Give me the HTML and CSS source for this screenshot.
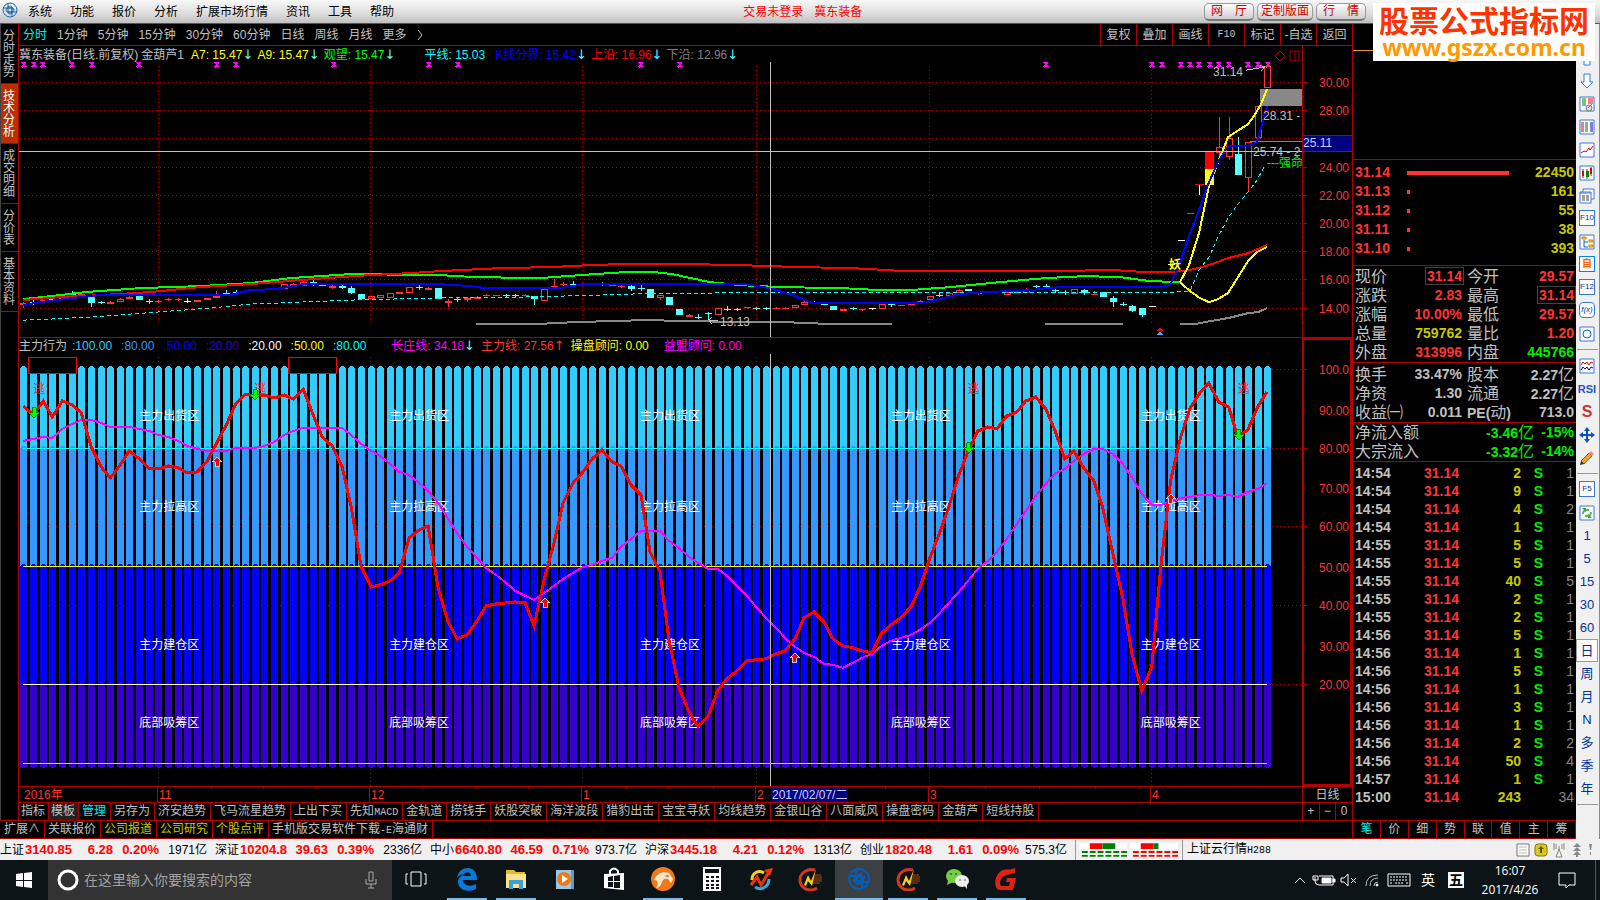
FILE: index.html
```html
<!DOCTYPE html>
<html lang="zh-CN">
<head>
    <meta charset="UTF-8">
    <meta name="viewport" content="width=device-width, initial-scale=1.0">
    <title>冀东装备 - 技术分析</title>
    <link rel="stylesheet" href="styles.css">
</head>
<body>
    <header class="menubar">
        <svg class="logo" viewBox="0 0 16 16"><circle cx="8" cy="8" r="7" /><path d="M1 6h9a2 2 0 0 1 0 4H5M15 10H6a2 2 0 0 1 0-4h5M6 1v9a2 2 0 0 0 4 0V5M10 15V6a2 2 0 0 0-4 0" /></svg>
        <nav class="menus">
            <a href="#">系统</a>
            <a href="#">功能</a>
            <a href="#">报价</a>
            <a href="#">分析</a>
            <a href="#">扩展市场行情</a>
            <a href="#">资讯</a>
            <a href="#">工具</a>
            <a href="#">帮助</a>
        </nav>
        <div class="window-title"><span>交易未登录</span><span>冀东装备</span></div>
        <div class="menubar-buttons">
            <button type="button">网&emsp;厅</button>
            <button type="button">定制版面</button>
            <button type="button">行&emsp;情</button>
        </div>
        <div class="watermark">
            <strong>股票公式指标网</strong>
            <span>www.gszx.com.cn</span>
        </div>
    </header>

    <main class="workspace">
        <div class="left-area">
            <div class="upper">
                <nav class="side-tabs">
                    <a href="#">分时走势</a>
                    <a href="#" class="active">技术分析</a>
                    <a href="#">成交明细</a>
                    <a href="#" class="short">分价表</a>
                    <a href="#">基本资料</a>
                </nav>
                <div class="chart-column">
                    <div class="toolbar">
                        <nav class="periods">
                            <a href="#" class="active">分时</a>
                            <a href="#">1分钟</a>
                            <a href="#">5分钟</a>
                            <a href="#">15分钟</a>
                            <a href="#">30分钟</a>
                            <a href="#">60分钟</a>
                            <a href="#">日线</a>
                            <a href="#">周线</a>
                            <a href="#">月线</a>
                            <a href="#">更多</a>
                            <svg class="chevron" viewBox="0 0 6 12"><path d="M1 1l4 5-4 5" /></svg>
                        </nav>
                        <div class="actions">
                            <button type="button">复权</button>
                            <button type="button">叠加</button>
                            <button type="button">画线</button>
                            <button type="button" class="half">F10</button>
                            <button type="button">标记</button>
                            <button type="button">-自选</button>
                            <button type="button">返回</button>
                        </div>
                    </div>

                    <section class="pane pane-price">
                        <div class="plot">
                            <div class="legend prices">
                                <span>冀东装备(日线.前复权)</span>
                                <span class="name">金葫芦1</span>
                                <span class="yellow down">A7: 15.47</span>
                                <span class="yellow down">A9: 15.47</span>
                                <span class="green down">观望: 15.47</span>
                                <span class="cyan plain">平线: 15.03</span>
                                <span class="blue down">K线分界: 15.42</span>
                                <span class="red down">上沿: 16.96</span>
                                <span class="gray down">下沿: 12.96</span>
                                <svg class="pane-icons" viewBox="0 0 26 12"><path d="M1 6l5-5 5 5-5 5zM16 1h9v10h-9zM21 1v10" /></svg>
                            </div>
                            <svg id="price" class="chart" viewBox="19 62 1283 275"></svg>
                        </div>
                        <svg id="priceAxis" class="axis" viewBox="1303 46 49 291"></svg>
                    </section>

                    <section class="pane pane-indicator">
                        <div class="plot">
                            <div class="legend values">
                                <span class="title">主力行为</span>
                                <span class="sky">:100.00</span>
                                <span class="azure">:80.00</span>
                                <span class="blue">:50.00</span>
                                <span class="indigo">:20.00</span>
                                <span class="white">:20.00</span>
                                <span class="yellow">:50.00</span>
                                <span class="cyan">:80.00</span>
                                <span class="magenta down long">长庄线: 34.18</span>
                                <span class="red up">主力线: 27.56</span>
                                <span class="yellow">操盘顾问: 0.00</span>
                                <span class="magenta wide">益盟顾问: 0.00</span>
                            </div>
                            <svg id="indicator" class="chart" viewBox="19 354 1283 432"></svg>
                        </div>
                        <svg id="indicatorAxis" class="axis framed" viewBox="1304 340 46 444"></svg>
                    </section>

                    <div class="date-row">
                        <svg id="dates" class="dates" viewBox="19 788 1283 15"></svg>
                        <button type="button" class="period-name">日线</button>
                    </div>

                    <div class="template-row">
                        <nav class="cells">
                            <a href="#" class="tight">指标</a>
                            <a href="#" class="tight pressed">模板</a>
                            <a href="#" class="active">管理</a>
                            <a href="#">另存为</a>
                            <a href="#">济安趋势</a>
                            <a href="#">飞马流星趋势</a>
                            <a href="#">上出下买</a>
                            <a href="#">先知<span class="half">MACD</span></a>
                            <a href="#">金轨道</a>
                            <a href="#">捞钱手</a>
                            <a href="#">妖股突破</a>
                            <a href="#">海洋波段</a>
                            <a href="#">猎豹出击</a>
                            <a href="#">宝宝寻妖</a>
                            <a href="#">均线趋势</a>
                            <a href="#">金银山谷</a>
                            <a href="#">八面威风</a>
                            <a href="#">操盘密码</a>
                            <a href="#">金葫芦</a>
                            <a href="#">短线持股</a>
                        </nav>
                        <div class="zoom-buttons">
                            <button type="button">+</button>
                            <button type="button">−</button>
                            <button type="button">0</button>
                        </div>
                    </div>
                </div>
            </div>
            <nav class="cells link-row">
                <a href="#">扩展∧</a>
                <a href="#">关联报价</a>
                <a href="#" class="gold">公司报道</a>
                <a href="#" class="gold">公司研究</a>
                <a href="#" class="gold">个股点评</a>
                <a href="#">手机版交易软件下载<span class="half">-E</span>海通财</a>
            </nav>
        </div>

        <aside class="quote">
            <div class="quote-top"></div>
            <table class="orders">
                <tr><td>31.14</td><td><i class="bar full"></i></td><td>22450</td></tr>
                <tr><td>31.13</td><td><i class="bar"></i></td><td>161</td></tr>
                <tr><td>31.12</td><td><i class="bar"></i></td><td>55</td></tr>
                <tr><td>31.11</td><td><i class="bar"></i></td><td>38</td></tr>
                <tr><td>31.10</td><td><i class="bar"></i></td><td>393</td></tr>
            </table>
            <table class="facts">
                <tr><th>现价</th><td class="up"><b class="boxed">31.14</b></td><th>今开</th><td class="up">29.57</td></tr>
                <tr><th>涨跌</th><td class="up">2.83</td><th>最高</th><td class="up"><b class="boxed">31.14</b></td></tr>
                <tr><th>涨幅</th><td class="up">10.00%</td><th>最低</th><td class="up">29.57</td></tr>
                <tr><th>总量</th><td class="vol">759762</td><th>量比</th><td class="up">1.20</td></tr>
                <tr><th>外盘</th><td class="up">313996</td><th>内盘</th><td class="dn">445766</td></tr>
            </table>
            <table class="facts ratios">
                <tr><th>换手</th><td>33.47%</td><th>股本</th><td>2.27<em>亿</em></td></tr>
                <tr><th>净资</th><td>1.30</td><th>流通</th><td>2.27<em>亿</em></td></tr>
                <tr><th>收益㈠</th><td>0.011</td><th><b>PE(</b>动<b>)</b></th><td>713.0</td></tr>
            </table>
            <table class="flows">
                <tr><th>净流入额</th><td>-3.46<em>亿</em></td><td>-15%</td></tr>
                <tr><th>大宗流入</th><td>-3.32<em>亿</em></td><td>-14%</td></tr>
            </table>
            <table class="ticks">
                <tr><td>14:54</td><td>31.14</td><td>2</td><td>S</td><td>1</td></tr>
                <tr><td>14:54</td><td>31.14</td><td>9</td><td>S</td><td>1</td></tr>
                <tr><td>14:54</td><td>31.14</td><td>4</td><td>S</td><td>2</td></tr>
                <tr><td>14:54</td><td>31.14</td><td>1</td><td>S</td><td>1</td></tr>
                <tr><td>14:55</td><td>31.14</td><td>5</td><td>S</td><td>1</td></tr>
                <tr><td>14:55</td><td>31.14</td><td>5</td><td>S</td><td>1</td></tr>
                <tr><td>14:55</td><td>31.14</td><td>40</td><td>S</td><td>5</td></tr>
                <tr><td>14:55</td><td>31.14</td><td>2</td><td>S</td><td>1</td></tr>
                <tr><td>14:55</td><td>31.14</td><td>2</td><td>S</td><td>1</td></tr>
                <tr><td>14:56</td><td>31.14</td><td>5</td><td>S</td><td>1</td></tr>
                <tr><td>14:56</td><td>31.14</td><td>1</td><td>S</td><td>1</td></tr>
                <tr><td>14:56</td><td>31.14</td><td>5</td><td>S</td><td>1</td></tr>
                <tr><td>14:56</td><td>31.14</td><td>1</td><td>S</td><td>1</td></tr>
                <tr><td>14:56</td><td>31.14</td><td>3</td><td>S</td><td>1</td></tr>
                <tr><td>14:56</td><td>31.14</td><td>1</td><td>S</td><td>1</td></tr>
                <tr><td>14:56</td><td>31.14</td><td>2</td><td>S</td><td>2</td></tr>
                <tr><td>14:56</td><td>31.14</td><td>50</td><td>S</td><td>4</td></tr>
                <tr><td>14:57</td><td>31.14</td><td>1</td><td>S</td><td>1</td></tr>
                <tr><td>15:00</td><td>31.14</td><td>243</td><td></td><td>34</td></tr>
            </table>
            <nav class="quote-tabs">
                <a href="#" class="active">笔</a>
                <a href="#">价</a>
                <a href="#">细</a>
                <a href="#">势</a>
                <a href="#">联</a>
                <a href="#">值</a>
                <a href="#">主</a>
                <a href="#">筹</a>
            </nav>
        </aside>

        <div class="toolstrip">
            <button type="button" aria-label="上移"><svg viewBox="0 0 16 16"><path class="line" d="M8 1L2 8h3v7h6V8h3z" /></svg></button>
            <button type="button" aria-label="下移"><svg viewBox="0 0 16 16"><path class="line" d="M8 15l6-6h-3V1H5v8H2z" /></svg></button>
            <button type="button" aria-label="报价设置"><svg viewBox="0 0 16 16"><path class="frame" d="M1 1h14v14H1z" /><path stroke="#008000" d="M3 3h4M3 5h4M3 7h4M3 9h4" /><path stroke="#e00000" d="M9 3h5M9 5h5M9 7h5" /><circle cx="10" cy="12" r="3" fill="#ddd" stroke="#777" /><path stroke="#777" d="M9 12l4-4" /></svg></button>
            <button type="button" aria-label="行情表"><svg viewBox="0 0 16 16"><path class="frame" d="M1 1h14v14H1z" /><path stroke="#e00000" d="M2 4h3M2 6h3M2 8h3M2 10h3M2 12h3" /><path stroke="#008000" d="M6 4h3M6 6h3M6 8h3M6 10h3M6 12h3" /><path stroke="#0000c0" d="M11 4h3M11 6h3M11 8h3M11 10h3M11 12h3" /></svg></button>
            <button type="button" aria-label="分时图"><svg viewBox="0 0 16 16"><path class="frame" d="M1 1h14v14H1z" /><path fill="none" stroke="#e00000" d="M2 11l3-2 2 1 3-4 1 2 3-4" /></svg></button>
            <button type="button" aria-label="K线图"><svg viewBox="0 0 16 16"><path class="frame" d="M1 1h14v14H1z" /><path stroke="#e00000" d="M4 4v9M12 2v9" /><path stroke="#008000" d="M8 4v10" /><path fill="#e00000" d="M3 6h2v5H3zM11 3h2v6h-2z" /><path fill="#008000" d="M7 6h3v6H7z" /></svg></button>
            <button type="button" aria-label="资讯"><svg viewBox="0 0 16 16"><path class="frame" d="M4 1h11v10H4z" /><path class="frame" d="M1 4h11v11H1z" /><path stroke="#3a78d8" d="M1 5h11" /><path stroke="#444" d="M3 8h3M3 10h3M3 12h3M7 8h3M7 10h3M7 12h3" /></svg></button>
            <button type="button" class="key">F10</button>
            <button type="button" aria-label="板块"><svg viewBox="0 0 16 16"><path class="frame" d="M1 1h14v14H1z" /><path fill="#fc3" stroke="#c80" d="M3 3h4v2H3zM10 6h4v2h-4zM10 11h4v2h-4z" /><path fill="none" stroke="#06c" d="M5 6v7h4M5 8h4" /></svg></button>
            <button type="button" class="key self">自</button>
            <button type="button" class="key">F12</button>
            <button type="button" class="key round">f(x)</button>
            <button type="button" aria-label="周期"><svg viewBox="0 0 16 16"><path class="frame" d="M1 1h14v14H1z" /><circle cx="8" cy="8" r="4" fill="none" stroke="#06c" /></svg></button>
            <hr>
            <button type="button" aria-label="指标"><svg viewBox="0 0 16 16"><path class="frame" d="M1 1h14v14H1z" /><path fill="none" stroke="#e00000" d="M2 7l2-3 2 2 2-2 2 3 2-3 2 1" /><path fill="none" stroke="#0000c0" d="M2 12l2-3 2 2 2-2 2 3 2-3 2 1" /></svg></button>
            <button type="button" class="rsi">RSI</button>
            <button type="button" class="dollar">S</button>
            <button type="button" aria-label="移动"><svg viewBox="0 0 16 16"><path fill="#0a52b8" d="M8 0l3 4H9v3h3V5l4 3-4 3V9H9v3h2l-3 4-3-4h2V9H4v2L0 8l4-3v2h3V4H5z" /></svg></button>
            <button type="button" aria-label="画线"><svg viewBox="0 0 16 16"><path fill="#f0a030" stroke="#a05a10" d="M2 11l8-8 3 3-8 8z" /><path fill="#e88" d="M10 3l2-2 3 3-2 2z" /><path fill="#333" d="M1 15l1-4 3 3z" /></svg></button>
            <hr>
            <button type="button" class="key">F5</button>
            <button type="button" aria-label="刷新"><svg viewBox="0 0 16 16"><path class="frame" d="M1 1h14v14H1z" /><path fill="none" stroke="#5b5" stroke-width="2" d="M4 9q0-4 4-4h2M12 7q0 4-4 4H6" /><path fill="#3a3" d="M3 3h4v4zM13 13H9V9z" /></svg></button>
            <button type="button">1</button>
            <button type="button">5</button>
            <button type="button">15</button>
            <button type="button">30</button>
            <button type="button">60</button>
            <button type="button" class="pressed">日</button>
            <button type="button">周</button>
            <button type="button">月</button>
            <button type="button">N</button>
            <button type="button">多</button>
            <button type="button">季</button>
            <button type="button">年</button>
            <hr>
        </div>
    </main>

    <section class="indexbar">
        <div class="index"><span>上证</span><b>3140.85</b><b>6.28</b><b>0.20%</b><span>1971亿</span></div>
        <div class="index"><span>深证</span><b>10204.8</b><b>39.63</b><b>0.39%</b><span>2336亿</span></div>
        <div class="index"><span>中小</span><b>6640.80</b><b>46.59</b><b>0.71%</b><span>973.7亿</span></div>
        <div class="index"><span>沪深</span><b>3445.18</b><b>4.21</b><b>0.12%</b><span>1313亿</span></div>
        <div class="index"><span>创业</span><b>1820.48</b><b>1.61</b><b>0.09%</b><span>575.3亿</span></div>
        <svg class="breadth" viewBox="0 0 108 20">
            <path fill="#fff" d="M3 3h49v6H3zM55 3h49v6H55z" />
            <path fill="red" d="M14 3h13v6H14zM66 3h13v6H66z" />
            <path fill="green" d="M27 3h13v6H27zM79 3h5v6h-5z" />
            <path stroke="green" stroke-width="2" stroke-dasharray="6 2" d="M6 12h47M6 16h47" />
            <path stroke="red" stroke-width="2" stroke-dasharray="6 2" d="M58 12h47M58 16h47" />
        </svg>
        <span class="server">上证云行情<span class="half">H288</span></span>
        <svg class="status-icons" viewBox="0 0 80 18">
            <path fill="#fff" stroke="#777" d="M2 3h12v12H2z" /><path stroke="#bbb" d="M4 6h8M4 9h8M4 12h8" />
            <rect x="20" y="3" width="12" height="12" rx="3" fill="#d8c820" stroke="#887a00" /><path fill="#5a5000" d="M26 5l3 3h-2v4h-2V8h-2z" />
            <path fill="none" stroke="#887" d="M44 8l-3 8h6zM44 5v4M41 3v5M47 3v5M39 2v7M49 2v7" />
            <path fill="#888" d="M62 2l4 4h-8zM62 6l4 4h-8zM62 10l4 4h-8zM61 14h2v2h-2zM74 3h3l-1 6h-1zM75 11h1v3h-1z" />
        </svg>
    </section>

    <footer class="taskbar">
        <button type="button" class="start" aria-label="开始"><svg viewBox="0 0 16 16"><path fill="#fff" d="M0 2l7-1v7H0zM8 1l8-1v8H8zM0 9h7v6l-7-1zM8 9h8v7l-8-1z" /></svg></button>
        <label class="search">
            <svg class="cortana" viewBox="0 0 22 22"><circle cx="11" cy="11" r="9" /></svg>
            <input type="text" placeholder="在这里输入你要搜索的内容">
            <svg class="mic" viewBox="0 0 12 18"><path d="M4 1h4v9H4zM1 8v5h10V8M6 13v4M3 17h6" /></svg>
        </label>
        <div class="apps">
            <button type="button" class="taskview" aria-label="任务视图"><svg viewBox="0 0 24 24"><path fill="none" stroke="#fff" d="M7 5h10v14H7zM4 7H2v10h2M20 7h2v10h-2" /></svg></button>
            <button type="button" class="running" aria-label="Edge"><svg viewBox="0 0 24 24"><path fill="#0a78d7" d="M2 11C3 4 8 1 13 1c6 0 9 5 9 12H8c0 6 8 7 13 4v5C13 26 3 23 3 15c0-4 3-6 6-8-2 0-5 1-7 4zm6-2h8c0-5-7-5-8 0z" /></svg></button>
            <button type="button" class="running" aria-label="文件资源管理器"><svg viewBox="0 0 24 24"><path fill="#e8b830" d="M2 3h8l2 2h9v15H2z" /><path fill="#fde28c" d="M2 7h20v14H2z" /><path fill="#3aa0dc" d="M5 13h14v9h-4v-5H9v5H5z" /></svg></button>
            <button type="button" aria-label="播放器"><svg viewBox="0 0 24 24"><path fill="#9cc8e4" d="M3 3h18v19H3z" /><path fill="#5f9cc4" d="M18 3h3v19h-3z" /><circle cx="11" cy="12" r="7" fill="#f07818" /><path fill="#fff" d="M9 8l6 4-6 4z" /></svg></button>
            <button type="button" aria-label="应用商店"><svg viewBox="0 0 24 24"><path fill="none" stroke="#fff" stroke-width="2" d="M8 7V4q4-5 8 0v3" /><path fill="#fff" d="M2 7l20-1v17L2 21z" /><path fill="#0d1518" d="M6 10l5-1v5H6zM12 9l6-1v6h-6zM6 15h5v5H6zM12 15h6v6h-6z" /></svg></button>
            <button type="button" class="running" aria-label="浏览器"><svg viewBox="0 0 24 24"><circle cx="12" cy="12" r="12" fill="#f07a1a" /><path fill="#ffe6c8" d="M3 13C6 6 12 4 18 6l4 6-2 4-3-4c-3-1-5 0-6 3-1 4-4 6-6 6 2-3 2-5 1-7-1-1-2-1-3-1z" /><path fill="#c45a10" d="M13 9l4-1 1 2z" /></svg></button>
            <button type="button" aria-label="计算器"><svg viewBox="0 0 24 24"><path fill="#fff" d="M3 0h18v24H3z" /><path fill="#0d1518" d="M5 2h14v4H5z" /><path stroke="#0d1518" stroke-width="2" stroke-dasharray="3 2" d="M6 10h13M6 14h13M6 18h13M6 21h13" /></svg></button>
            <button type="button" aria-label="行情软件"><svg viewBox="0 0 24 24"><path fill="none" stroke="#fc2" stroke-width="3" d="M3 13C3 5 10 3 15 6" /><path fill="none" stroke="#3ad" stroke-width="3" d="M20 12c0 8-8 12-14 8" /><path fill="none" stroke="#e31" stroke-width="3" d="M2 18l6-8 4 8L20 5" /><path fill="#e31" d="M15 3l9-2-3 8z" /></svg></button>
            <button type="button" aria-label="交易软件"><svg viewBox="0 0 24 24"><path fill="none" stroke="#d4381c" stroke-width="3" d="M19 21C11 26 2 21 2 13 2 6 9 1 17 3" /><path fill="#fc2" d="M6 18L10 8l3 6 5-12-4 17-4-5-2 5z" /><path stroke="#a4481c" d="M17 8h6M16 10h8M16 12h8M15 14h9M15 16h7" /></svg></button>
            <button type="button" class="running current" aria-label="海通证券"><svg viewBox="0 0 24 24"><circle cx="12" cy="12" r="10" fill="none" stroke="#0a5cb0" stroke-width="2" /><path fill="none" stroke="#0a5cb0" stroke-width="2" d="M2 9h12a2 2 0 0 1 0 5H6M22 15H10a2 2 0 0 1 0-5h8M9 2v12a2 2 0 0 0 5 0V6M15 22V10a2 2 0 0 0-5 0v8" /></svg></button>
            <button type="button" class="running" aria-label="交易软件"><svg viewBox="0 0 24 24"><path fill="none" stroke="#d4381c" stroke-width="3" d="M19 21C11 26 2 21 2 13 2 6 9 1 17 3" /><path fill="#fc2" d="M6 18L10 8l3 6 5-12-4 17-4-5-2 5z" /><path stroke="#a4481c" d="M17 8h6M16 10h8M16 12h8M15 14h9M15 16h7" /></svg></button>
            <button type="button" class="running" aria-label="微信"><svg viewBox="0 0 24 24"><ellipse cx="9" cy="9" rx="8" ry="7" fill="#7c4" /><path fill="#7c4" d="M3 13l-1 5 6-3z" /><circle cx="6" cy="7" r="1" fill="#264" /><circle cx="11" cy="7" r="1" fill="#264" /><ellipse cx="17" cy="14" rx="7" ry="6" fill="#eee" /><path fill="#eee" d="M19 18l3 4v-6z" /><circle cx="15" cy="13" r="1" fill="#888" /><circle cx="20" cy="13" r="1" fill="#888" /></svg></button>
            <button type="button" class="running" aria-label="行情工具"><svg viewBox="0 0 24 24"><path fill="#d21" d="M21 1v5l-8 2c-7 1-9 11-5 11h7l1-4h-4l1-4h9l-3 12H6C0 23-1 10 7 4c4-3 8 0 14-3z" /></svg></button>
        </div>
        <div class="tray">
            <svg class="tray-icons" viewBox="0 0 128 24">
                <path d="M2 15l5-5 5 5" />
                <path d="M26 8h14v9H26M22 9v4M20 8h5v4h-5zM22 13q0 4 4 4" /><path fill="#fff" d="M29 10h9v5h-9zM40 11h2v3h-2z" />
                <path d="M48 10h3l4-4v12l-4-4h-3zM58 10l5 5M63 10l-5 5" />
                <path d="M73 18Q73 7 85 7M77 18q0-8 8-8M81 18q0-4 4-4" stroke="#bbb" /><circle cx="84" cy="17" r="1" fill="#fff" />
                <path d="M95 6h22v12H95z" /><path stroke-dasharray="2 1" d="M97 9h18M97 12h18M97 15h3M102 15h9M113 15h2" />
            </svg>
            <span class="ime">英</span>
            <span class="ime wubi">五</span>
            <div class="clock"><span>16:07</span><span>2017/4/26</span></div>
            <svg class="notice" viewBox="0 0 18 18"><path d="M1 2h16v12h-6l-3 3v-3H1z" /></svg>
            <span class="show-desktop"></span>
        </div>
    </footer>
    <script src="chart.js"></script>
</body>
</html>
```

FILE: styles.css
```css
* { margin: 0; padding: 0; box-sizing: border-box; }
body { min-height: 100vh; display: flex; flex-direction: column; background: #000; color: #c0c0c0; font-family: "Liberation Sans", "Noto Sans CJK SC", sans-serif; font-size: 12px; line-height: 16px; white-space: nowrap; overflow-x: hidden; }
a { color: inherit; text-decoration: none; }
button { background: none; border: none; color: inherit; font: inherit; white-space: nowrap; }
table { border-collapse: collapse; width: 100%; }
em, i { font-style: normal; }
.half { font-family: "Liberation Mono", monospace; font-size: 10px; }

.menubar { position: relative; height: 24px; flex: none; display: flex; align-items: center; background: linear-gradient(#f8f8f8, #dcdcdc 60%, #c0c0c0); border-bottom: 1px solid #555; color: #000; }
.logo { width: 16px; height: 16px; margin: 0 10px 4px 2px; fill: none; stroke: #1668a8; }
.menus { display: flex; gap: 18px; }
.window-title { margin-left: 349px; display: flex; gap: 11px; color: #f00; }
.menubar-buttons { margin-left: auto; margin-right: 234px; display: flex; gap: 3px; }
.menubar-buttons button { height: 18px; padding: 0 3px; min-width: 50px; color: #c00; background: linear-gradient(#fff, #ccc); border: 1px solid #999; border-bottom: 2px solid #777; border-radius: 5px; line-height: 14px; }
.watermark { position: absolute; z-index: 2; right: 5px; top: 3px; width: 222px; height: 58px; background: #fff; text-align: center; }
.watermark strong, .watermark span { display: block; font-weight: bold; }
.watermark strong { font-size: 30px; line-height: 37px; color: #f30; }
.watermark span { font-family: "Noto Sans", sans-serif; font-size: 23px; line-height: 14px; color: #f90; }

.workspace { flex: 1; display: flex; }
.left-area { flex: 1; min-width: 0; display: flex; flex-direction: column; border-right: 1px solid #b00000; }
.upper { flex: 1; display: flex; }
.side-tabs { width: 19px; border-right: 1px solid #b00000; border-left: 1px solid #444; }
.side-tabs a { display: flex; align-items: center; height: 60px; padding: 0 3px 0 2px; border-bottom: 1px solid #b00000; line-height: 12px; white-space: normal; word-break: break-all; }
.side-tabs a.short { height: 48px; }
.side-tabs a.active { background: #b83000; color: #fff; }
.chart-column { flex: 1; min-width: 0; display: flex; flex-direction: column; }

.toolbar { height: 22px; flex: none; display: flex; justify-content: space-between; border-bottom: 1px solid #b00000; }
.periods { display: flex; align-items: center; gap: 10px; padding-left: 4px; }
.periods .active { color: #0ee; }
.chevron { width: 6px; height: 12px; fill: none; stroke: #c0c0c0; }
.actions { display: flex; }
.actions button { width: 36px; border-left: 1px solid #b00000; }

.pane { display: flex; min-height: 0; border-bottom: 1px solid #b00000; }
.pane-price { flex: 292 0 0; }
.pane-indicator { flex: 449 0 0; }
.plot { flex: 1; min-width: 0; display: flex; flex-direction: column; }
.legend { height: 16px; flex: none; display: flex; gap: 7px; position: relative; }
.prices { padding-top: 1px; }
.legend .name { margin-left: -4px; }
.legend .plain { margin: 0 3px 0 25px; }
.legend .down::after, .legend .up::after { content: "↓"; display: inline-block; width: 8px; color: #5ff; font-family: "DejaVu Sans", sans-serif; font-size: 13px; line-height: 14px; }
.legend .up::after { content: "↑"; color: #f33; }
.values { gap: 9px; }
.values .title { margin-right: -4px; }
.values .long { margin-left: 16px; }
.values .wide { margin-left: 6px; }
.pane-icons { width: 26px; height: 12px; margin: 3px 2px 0 auto; fill: none; stroke: #b00000; }
.chart { flex: 1; min-height: 0; width: 100%; display: block; shape-rendering: crispEdges; }
.axis { width: 50px; flex: none; border-left: 1px solid #b00000; shape-rendering: crispEdges; }
.axis.framed { border: 2px solid #b00000; }
.yellow { color: #ff0; }
.green { color: #0f0; }
.cyan { color: #0ff; }
.blue { color: #00f; }
.red { color: #f00; }
.gray { color: #808080; }
.sky { color: #3cf; }
.azure { color: #39f; }
.indigo { color: #30c; }
.white { color: #fff; }
.magenta { color: #f0f; }

/* chart parts */
svg text { font-size: 12px; fill: #c0c0c0; }
svg .tick { fill: #f33; }
svg .cursor-text { fill: #d0d0ff; }
svg .zone { fill: #fff; }
svg .flee { fill: #f22; }
svg .strong { fill: #0f0; }
svg .demon { fill: #ff0; font-weight: bold; }
.grid { stroke: #b00000; stroke-dasharray: 1 3; }
.rule { stroke: #b00000; }
.cross { stroke: #c0c0c0; }
.curve { fill: none; stroke-width: 2; }
.curve.thick { stroke-width: 3; }
.curve.dash { stroke-width: 1; stroke-dasharray: 4 3; }

.date-row { height: 16px; flex: none; display: flex; border-bottom: 1px solid #b00000; }
.dates { flex: 1; min-width: 0; shape-rendering: crispEdges; }
.period-name { width: 50px; border-left: 1px solid #b00000; }
.template-row { height: 17px; flex: none; display: flex; justify-content: space-between; line-height: 17px; }
.cells { display: flex; }
.cells a { padding: 0 4px 0 3px; border-right: 1px solid #b00000; }
.cells .tight { padding: 0 3px 0 2px; }
.cells .pressed { background: #222; }
.cells .active { color: #0ee; }
.cells .gold { color: #c8c800; }
.zoom-buttons { display: flex; width: 50px; }
.zoom-buttons button { flex: 1; border-left: 1px solid #b00000; }
.link-row { height: 19px; flex: none; padding-left: 1px; border-top: 1px solid #b00000; border-bottom: 1px solid #b00000; line-height: 17px; }

.quote { width: 223px; flex: none; display: flex; flex-direction: column; font-size: 14px; font-weight: bold; }
.quote-top { height: 136px; padding-top: 26px; border-bottom: 1px solid #b00000; }
.quote-top::before { content: ""; display: block; height: 1px; background: #e89820; }
.quote table { display: block; padding: 0 2px; border-bottom: 1px solid #b00000; }
.quote tbody { display: block; }
.quote tr { display: flex; height: 19px; line-height: 19px; }
.quote td { text-align: right; }
.quote th, .quote em { font-weight: normal; font-size: 16px; }
.quote th { text-align: left; }
.quote th b { font-size: 14px; }
.quote .orders { height: 106px; padding-top: 3px; }
.orders td:first-child { width: 52px; text-align: left; color: #f33; }
.orders td:nth-child(2) { flex: 1; text-align: left; }
.orders td:last-child { color: #c8c800; }
.bar { display: inline-block; vertical-align: middle; width: 3px; height: 4px; background: #f33; }
.bar.full { width: 102px; }
.quote .facts { padding-top: 1px; }
.quote .ratios { padding-top: 2px; }
.facts th { width: 40px; }
.facts td { flex: 1; }
.facts th:nth-child(3) { margin-left: 5px; width: 44px; }
.facts th:first-child { width: 48px; }
.facts td:nth-child(2) { flex: none; width: 59px; }
.boxed { display: inline-block; height: 18px; line-height: 16px; padding: 0 1px; border: 1px solid #444; margin-right: -2px; }
.up { color: #f33; }
.dn, .flows td { color: #0e0; }
.vol { color: #c8c800; }
.flows th { flex: 1; }
.flows td:last-child { width: 40px; }
.quote .ticks { flex: 1; padding-top: 2px; }
.quote .ticks tr { height: 18px; line-height: 18px; }
.ticks td:nth-child(1) { width: 36px; text-align: left; }
.ticks td:nth-child(2) { width: 68px; color: #f33; }
.ticks td:nth-child(3) { width: 62px; color: #c8c800; }
.ticks td:nth-child(4) { width: 22px; color: #0e0; }
.ticks td:nth-child(5) { flex: 1; color: #888; font-weight: normal; }
.quote-tabs { height: 18px; flex: none; display: flex; border-bottom: 1px solid #b00000; font-size: 12px; font-weight: normal; line-height: 17px; }
.quote-tabs a { flex: 1; text-align: center; border-right: 1px solid #b00000; }
.quote-tabs .active { color: #0ee; }

.toolstrip { width: 24px; flex: none; display: flex; flex-direction: column; padding-top: 22px; background: #f0f0f0; border-right: 1px solid #888; color: #039; }
.toolstrip button { display: flex; align-items: center; justify-content: center; width: 22px; height: 23px; flex: none; font-size: 13px; }
.toolstrip svg { width: 16px; height: 16px; }
.toolstrip hr { border: none; border-top: 1px solid #999; margin: 4px 1px; }
.toolstrip .line { fill: #fff; stroke: #3a78d8; }
.toolstrip .frame { fill: #fff; stroke: #3a78d8; }
.toolstrip .key { width: 16px; height: 16px; margin: 3px 3px 4px; border: 1px solid #3a78d8; background: #fff; font-size: 8px; line-height: 14px; }
.toolstrip .self { color: #f60; border-color: #08e; font-weight: bold; font-size: 10px; }
.toolstrip .round { border-radius: 4px; font-style: italic; }
.toolstrip .rsi { font-size: 11px; font-weight: bold; color: #2a50c8; }
.toolstrip .dollar { font-size: 16px; font-weight: bold; color: #c33; }
.toolstrip .pressed { background: #fafafa; border: 1px solid #999; }

.indexbar { height: 21px; flex: none; display: flex; align-items: center; background: #f0f0f0; color: #000; }
.index { display: grid; grid-template-columns: 24px 48px 41px 46px 48px; width: 215px; text-align: right; }
.index span:first-child { text-align: left; }
.index b { color: #f00; font-size: 13px; }
.breadth { width: 108px; height: 20px; border-left: 1px solid #999; border-right: 1px solid #999; }
.server { margin-left: 4px; }
.status-icons { width: 80px; height: 18px; margin: 0 5px 0 auto; }

.taskbar { height: 40px; flex: none; display: flex; background: #0c1418; color: #fff; }
.start { width: 48px; }
.start svg { width: 16px; height: 16px; vertical-align: middle; }
.search { width: 344px; display: flex; align-items: center; background: #333; }
.cortana { width: 22px; height: 22px; margin: 0 5px 0 9px; fill: none; stroke: #fff; stroke-width: 3; }
.search input { flex: 1; min-width: 0; background: none; border: none; outline: none; color: #fff; font: inherit; font-size: 14px; }
.search input::placeholder { color: #a0a0a0; }
.mic { width: 12px; height: 18px; margin-right: 15px; fill: none; stroke: #aaa; }
.apps { display: flex; gap: 1px; }
.apps button { width: 48px; border-bottom: 2px solid transparent; display: flex; align-items: center; justify-content: center; }
.apps svg { width: 24px; height: 24px; }
.apps .taskview { margin-right: 2px; }
.apps .running { width: 40px; margin: 0 4px; border-color: #76b9ed; }
.apps .current { width: 48px; margin: 0; background: #3c4043; }
.tray { margin-left: auto; display: flex; align-items: center; }
.tray-icons { width: 128px; height: 24px; fill: none; stroke: #fff; }
.ime { font-size: 14px; line-height: 16px; }
.wubi { margin: 0 11px 0 13px; background: #fff; color: #000; font-weight: bold; padding: 0 1px; }
.clock { width: 70px; font-family: "Open Sans", sans-serif; text-align: center; line-height: 19px; }
.clock span { display: block; }
.notice { width: 18px; height: 18px; margin: 0 19px 0 13px; fill: none; stroke: #fff; }
.show-desktop { width: 5px; height: 40px; border-left: 1px solid #555; }
```

FILE: chart.js
```js
// x of the n-th trading day
const X = i => 23.4 + i * 9.643;
const rect = (x, y, w, h, fill, stroke = 'none') => `<rect x="${x}" y="${y}" width="${w}" height="${h}" fill="${fill}" stroke="${stroke}"/>`;
const line = (x1, y1, x2, y2, attrs) => `<line x1="${x1}" y1="${y1}" x2="${x2}" y2="${y2}" ${attrs}/>`;
const text = (x, y, s, cls = '') => `<text x="${x}" y="${y}" class="${cls}">${s}</text>`;
const curve = (pts, color, cls = '') => `<polyline class="curve ${cls}" stroke="${color}" points="${pts}"/>`;
const draw = (id, s) => { document.getElementById(id).innerHTML = s; };

const months = [[14, '11'], [36, '12'], [58, '1'], [76, '2'], [94, '3'], [117, '4']];
const RED = '#ff3333', CYAN = '#55ffff', WHITE = '#ffffff';
const colors = { r: RED, c: CYAN, w: WHITE };

// day, colour, high, body top, body bottom, low
const candles = [
    [0,'r',302,303,305,308],[1,'c',300,302,303,305],[2,'r',300,300,302,302],[3,'c',297,299,300,302],[4,'r',295,296,299,299],[5,'c',291,294,295,298],[6,'r',293,294,297,297],[7,'c',295,296,303,307],
    [8,'c',301,302,303,304],[9,'r',301,302,304,304],[10,'r',298,299,302,302],[11,'r',296,297,299,299],[12,'c',296,296,300,300],[13,'c',299,301,302,304],[14,'r',300,301,302,303],[15,'r',298,299,300,301],
    [16,'r',298,299,300,301],[17,'w',298,301,302,303],[18,'r',300,300,302,302],[19,'r',298,298,300,300],[20,'r',291,296,298,298],[21,'c',290,293,294,295],[22,'c',290,292,293,294],[27,'r',284,284,289,289],
    [28,'r',283,284,287,287],[29,'r',280,282,286,286],[30,'c',280,282,283,286],[31,'c',284,285,286,286],[32,'r',285,286,288,289],[33,'c',285,286,288,289],[34,'c',286,288,293,294],[35,'c',294,294,299,299],
    [36,'r',296,296,299,299],[37,'r',295,295,298,298],[38,'r',293,293,298,298],[39,'r',292,292,294,294],[40,'r',287,287,293,293],[41,'c',285,287,288,290],[42,'r',287,288,290,290],[43,'c',288,288,299,299],
    [44,'r',299,301,303,307],[45,'c',297,299,300,302],[46,'r',297,298,300,302],[47,'r',296,297,299,299],[48,'r',294,295,296,296],[49,'r',295,295,296,296],[50,'c',294,295,296,297],[51,'c',294,295,296,297],
    [52,'r',294,295,296,296],[53,'c',296,296,299,305],[54,'r',289,289,301,301],[55,'r',279,286,287,289],[56,'r',282,284,285,286],[57,'c',281,284,285,286],[60,'c',282,283,284,286],[61,'r',284,285,286,286],
    [62,'r',285,286,287,288],[63,'c',285,286,289,291],[64,'c',285,288,289,291],[65,'c',289,289,298,298],[66,'r',295,295,298,300],[67,'c',297,297,305,305],[68,'c',309,309,315,315],[69,'r',314,315,317,317],
    [70,'c',314,317,318,319],[71,'c',312,313,314,322],[72,'r',308,308,315,315],[73,'c',306,309,310,311],[74,'c',308,309,310,311],[75,'r',307,307,308,309],[76,'c',307,308,309,310],[77,'c',307,308,309,310],
    [78,'r',307,308,309,309],[79,'r',307,308,309,309],[80,'r',305,305,308,308],[81,'r',301,302,305,305],[82,'c',301,302,303,304],[83,'c',303,303,305,305],[84,'c',306,306,310,310],[85,'r',309,309,311,311],
    [86,'c',307,308,309,310],[87,'r',309,309,310,311],[88,'w',308,308,309,310],[89,'r',304,304,309,309],[90,'c',303,304,305,307],[91,'r',305,305,306,306],[92,'r',304,304,305,305],[93,'r',300,301,302,303],
    [94,'r',296,296,300,300],[95,'c',293,295,296,297],[96,'r',293,293,296,296],[97,'r',289,290,293,293],[98,'c',289,289,291,291],[99,'r',292,293,294,295],[100,'c',292,292,293,293],[102,'r',292,292,295,295],
    [103,'c',292,292,293,293],[104,'r',288,289,293,293],[105,'c',285,286,287,288],[106,'c',284,286,287,288],[107,'c',289,290,291,293],[108,'c',290,292,293,295],[109,'r',289,289,294,294],[110,'c',289,290,293,295],
    [111,'r',291,294,295,295],[112,'c',292,292,297,297],[113,'c',296,298,302,307],[114,'c',302,304,305,306],[115,'c',305,306,311,312],[116,'c',308,308,315,317],[117,'w',306,306,307,307],[118,'w',286,286,287,287],
    [119,'w',264,264,265,265],[120,'w',240,240,241,241],[121,'r',213,213,214,214],[124,'r',117,147,153,162],[125,'r',117,138,157,160],[126,'c',137,154,175,175],[127,'r',142,142,178,191],[128,'r',106,106,138,138],[129,'r',66,66,88,88]
];

function grid(ys, top, bottom) {
    return ys.map(y => line(20, y + .5, 1302, y + .5, 'class="grid"')).join('') +
        months.map(([i]) => { const x = Math.floor(X(i)) + .5; return line(x, top, x, bottom, 'class="grid"'); }).join('');
}

function candle([i, c, hi, top, bottom, lo]) {
    const x = Math.round(X(i)), color = colors[c];
    const wick = line(x + .5, hi, x + .5, top, `stroke="${color}"`) + line(x + .5, bottom, x + .5, lo, `stroke="${color}"`);
    if (c === 'r' && bottom - top > 2) return wick + rect(x - 2.5, top + .5, 6, bottom - top - 1, 'none', color);
    return wick + rect(x - 3, top, 7, bottom - top, color);
}

const marks = [24, 34, 43, 72, 92, 139, 217, 236, 334, 429, 458, 641, 680, 1046, 1152, 1162, 1181, 1190, 1199, 1210, 1219, 1229, 1248, 1258, 1268];
const priceY = [82, 110, 138, 167, 195, 223, 251, 279, 308];

draw('price',
    grid(priceY, 66, 324) +
    marks.map(x => `<path stroke="#f0f" stroke-width="2" d="M${x - 2} 62l4 5M${x + 2} 62l-4 5"/>`).join('') +
    candles.map(candle).join('') +
    rect(1260, 89, 42, 17, '#888') + rect(1205, 152, 9, 17, '#f00') + rect(1205, 169, 9, 16, '#ff0') +
    rect(1195, 184, 9, 1, '#f00') + rect(1199, 185, 1, 10, '#fff') +
    line(1250, 141.5, 1302, 141.5, 'stroke="#888"') +
    curve('476,324 535,324 575,322 645,320 740,322 785,322 832,324 892,324', '#888') +
    curve('1045,324 1123,324', '#888') +
    curve('1180,324 1195,324 1210,321 1228,318 1248,313 1258,312 1267,308', '#888') +
    curve('23,320 50,319 90,317 130,314 170,311 210,308 250,304 300,302 350,300 430,298 520,297 600,295 660,293 1175,292 1190,291 1199,270 1209,257 1218,237 1228,218 1238,204 1248,192 1257,180 1265,165', '#0ff', 'dash') +
    curve('23,299 60,295 85,292 140,288 200,286 250,283 290,278 350,274 440,275 475,277 540,278 580,275 625,272 655,272 672,274 710,282 740,285 780,287 842,288 880,290 910,290 950,287 1000,282 1045,278 1085,276 1120,277 1150,281 1180,282', '#0f0') +
    curve('23,300 60,297 100,295 150,292 200,287 250,284 300,280 340,277 370,275 410,273 440,271 500,268 550,267 590,265 620,264 690,264 740,265 800,267 852,268 905,271 1040,271 1115,270 1145,272 1170,272 1190,270 1209,265 1228,258 1248,253 1267,245', '#f00') +
    curve('1180,282 1189,265 1199,233 1209,186 1218,162 1228,137 1248,124 1254,116 1261,104 1267,89', '#ff0') +
    curve('1180,282 1190,291 1200,298 1209,302 1218,299 1228,293 1238,277 1248,261 1257,252 1267,247', '#ff0') +
    curve('23,305 40,302 80,297 100,295 230,295 250,290 275,289 305,284 440,284 470,286 485,288 560,288 585,284 745,284 770,288 795,296 812,303 920,303 935,300 960,294 985,292 1030,290 1060,287 1160,287 1170,285 1180,263 1189,236 1199,210 1209,182 1218,162 1228,146 1248,146 1257,142 1267,106', '#00f') +
    text(1213, 76, '31.14') + line(1246, 70, 1264, 67, 'stroke="#c0c0c0"') + '<path fill="none" stroke="#c0c0c0" d="M1260 65l5 2-4 4"/>' +
    text(1263, 120, '28.31 -') + text(1253, 156, '25.74 - 2') + text(1267, 167, '---强命', 'strong') +
    text(720, 326, '13.13') + '<path fill="none" stroke="#c0c0c0" d="M718 320h-9M712 317l-3 3 3 4"/>' +
    text(1169, 269, '妖', 'demon') +
    '<path fill="#f00" d="M1160 327l4 4h-8z"/><path fill="#5af" d="M1160 331l4 4h-8z"/>' +
    line(770.5, 62, 770.5, 337, 'class="cross"') + line(19, 151.5, 1302, 151.5, 'class="cross"'));

// the 26.00 label lies under the cursor price
draw('priceAxis',
    priceY.map((y, n) => line(1302, y + .5, 1307, y + .5, 'class="rule"') + line(1302, y + 14.5, 1304, y + 14.5, 'class="rule"') +
        (n === 2 ? '' : text(1319, y + 5, (30 - n * 2) + '.00', 'tick'))).join('') +
    rect(1302, 135.5, 51, 16, '#000080', '#b00000') + text(1303, 147, '25.11', 'cursor-text'));

const main = [406,415,401,417,401,405,413,447,467,478,465,451,459,469,469,466,468,473,472,461,444,425,403,394,396,395,398,395,399,389,415,437,446,467,507,567,587,585,581,573,538,530,526,588,622,639,635,621,606,604,603,602,603,626,580,543,503,483,472,459,450,462,466,485,495,552,572,640,688,712,727,717,690,679,671,661,660,659,654,651,639,618,612,622,639,646,648,651,653,633,625,618,607,588,558,535,507,475,452,431,427,429,416,412,401,397,409,430,459,451,468,481,508,553,598,653,691,667,567,480,437,409,393,383,402,407,437,430,407,392];
const dealer = [441,439,437,438,429,424,420,420,423,427,427,427,429,431,435,437,441,446,449,451,451,451,448,448,448,446,442,435,431,428,428,428,428,428,435,444,451,456,464,472,475,483,491,503,519,533,547,558,568,575,583,591,596,600,593,586,579,573,567,565,561,558,547,539,531,531,531,541,548,557,563,569,569,576,586,596,607,618,628,638,647,653,657,664,665,668,663,658,654,646,641,638,635,630,623,614,603,592,581,569,561,552,539,524,511,496,484,474,469,461,454,449,449,454,464,477,494,505,505,502,498,497,495,495,496,495,497,492,489,483];
const series = ys => ys.map((y, i) => Math.round(X(i)) + ',' + y).join(' ');

// stacked zones, each bar has a small cap at both ends
const zones = [[366, 446, '#33ccff'], [446, 564, '#3399ff'], [564, 682, '#0000ff'], [682, 765, '#3300cc']];
function bar(i) {
    const x = Math.round(X(i)) - 3;
    return zones.map(([a, b, c]) => rect(x, a + 2, 7, b - a, c) + rect(x + 2, a, 3, 2, c) + rect(x + 1, a + 1, 5, 1, c)).join('') +
        rect(x + 2, 767, 3, 1, '#3300cc');
}
const zoneNames = [[420, '主力出货区'], [511, '主力拉高区'], [649, '主力建仓区'], [727, '底部吸筹区']];
const up = (x, y) => `<path fill="#f00" stroke="#ccc" d="M${x} ${y - 5}l5 5h-3v5h-4v-5h-3z"/>`;
const down = (x, y) => `<path fill="#0f0" stroke="#080" d="M${x} ${y + 5}l5-5h-3v-5h-4v5h-3z"/>`;

draw('indicator',
    grid([369, 448, 526, 605, 684], 357, 787) +
    Array.from({ length: 130 }, (_, i) => bar(i)).join('') +
    rect(23, 448, 1244, 1, '#0ff') + rect(23, 566, 1244, 1, '#ff0') + rect(23, 684, 1244, 1, '#fff') + rect(23, 763, 1244, 1, '#ccc') +
    rect(28.5, 357.5, 48, 16, '#000', '#f00') + rect(288.5, 357.5, 48, 16, '#000', '#f00') +
    [139, 389, 640, 891, 1141].map(x => zoneNames.map(([y, s]) => text(x, y, s, 'zone')).join('')).join('') +
    curve(series(dealer), '#f0f') + curve(series(main), '#f00', 'thick') +
    [33, 254, 968, 1238].map(x => text(x, 393, '逃', 'flee')).join('') +
    down(34, 413) + down(255, 395) + down(969, 448) + down(1239, 435) +
    up(217, 462) + up(545, 603) + up(795, 658) + up(1171, 499) +
    line(770.5, 353, 770.5, 787, 'class="cross"'));

draw('indicatorAxis',
    [[369, '100.0'], [410, '90.00'], [448, '80.00'], [488, '70.00'], [526, '60.00'], [567, '50.00'], [605, '40.00'], [646, '30.00'], [684, '20.00']]
        .map(([y, s], n) => line(1304, y + .5, n % 2 ? 1305 : 1307, y + .5, 'class="rule"') + text(1319, y + 5, s, 'tick')).join(''));

draw('dates',
    text(24, 800, '2016年', 'tick') +
    [211, 263, 316, 422, 476, 528, 626, 668, 713, 885, 985, 1039, 1095].map(x => line(x + .5, 788, x + .5, 790, 'class="rule"')).join('') +
    months.map(([i, s]) => { const x = Math.floor(X(i)); return line(x - .5, 788, x - .5, 803, 'class="rule"') + text(x + 1, 800, s, 'tick'); }).join('') +
    rect(771, 788, 77, 15, '#000080') + text(772, 800, '2017/02/07/二', 'cursor-text'));
```
